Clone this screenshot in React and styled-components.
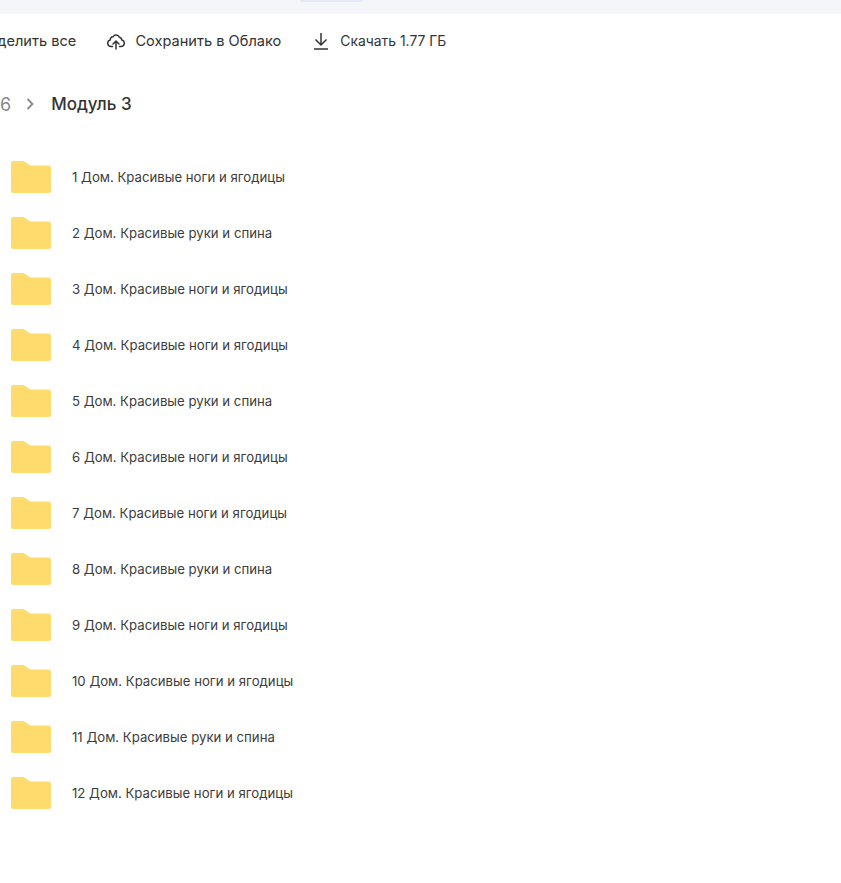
import React from 'react';
import styled, { createGlobalStyle } from 'styled-components';

const GlobalStyle = createGlobalStyle`
  html, body {
    margin: 0;
    padding: 0;
    background: #fff;
    overflow: hidden;
  }
  body {
    font-family: "Inter", "Roboto", "Liberation Sans", sans-serif;
  }
`;

const Page = styled.div`
  width: 841px;
  height: 883px;
  overflow: hidden;
  background: #fff;
`;

const TopStrip = styled.div`
  height: 14px;
  background: #f5f6f9;
  display: flex;
  justify-content: flex-start;
  padding-left: 300px;
`;

const ActiveTab = styled.div`
  width: 63px;
  height: 2px;
  background: #e3e8fb;
  border-radius: 0 0 3px 3px;
`;

const Toolbar = styled.div`
  height: 53px;
  display: flex;
  align-items: center;
  margin-left: -23px;
`;

const ToolButton = styled.div`
  display: flex;
  align-items: center;
  gap: ${(p) => p.$iconGap || 10}px;
  margin-right: ${(p) => p.$gap || 0}px;
  font-size: ${(p) => p.$size || 14.6}px;
  color: #333;
  white-space: nowrap;
`;

const Crumbs = styled.div`
  height: 46px;
  margin-top: 14px;
  display: flex;
  align-items: center;
`;

const CrumbParent = styled.span`
  font-size: 18px;
  color: #8a8a8a;
`;

const CrumbCurrent = styled.span`
  font-size: 17px;
  font-weight: 500;
  color: #333;
`;

const Chevron = styled.svg`
  margin: 0 16px 0 14px;
`;

const List = styled.div`
  margin-top: 22px;
  padding-left: 11px;
  display: flex;
  flex-direction: column;
`;

const Row = styled.div`
  height: 56px;
  display: flex;
  align-items: center;
  gap: 21px;
`;

const Name = styled.span`
  font-size: 13.2px;
  color: #3c3c3c;
`;

const CloudIcon = () => (
  <svg width="18" height="18" viewBox="0 0 18 18" fill="none" stroke="#333" strokeWidth="1.5" strokeLinecap="round" strokeLinejoin="round">
    <path d="M5.5 14.5H4A3.3 3.3 0 0 1 3.2 8 3 3 0 0 1 6 4.8 3.6 3.6 0 0 1 12.4 5.2 3 3 0 0 1 14.8 8 3.3 3.3 0 0 1 14 14.5H12.5" />
    <path d="M9 17V9.5M6 12L9 9L12 12" />
  </svg>
);

const DownloadIcon = () => (
  <svg width="16" height="18" viewBox="0 0 16 18" fill="none" stroke="#333" strokeWidth="1.5">
    <path d="M8 1V12.5M2.5 7.5L8 13L13.5 7.5" />
    <path d="M1 17H15" />
  </svg>
);

const FolderIcon = () => (
  <svg width="40" height="32" viewBox="0 0 40 32">
    <path
      d="M2 0H11.5C13 0 14 .6 15 1.6L19 4.5H37.5C39 4.5 40 5.5 40 7V29.5C40 31 39 32 37.5 32H2C.8 32 0 31 0 29.5V2C0 .8.8 0 2 0Z"
      fill="#ffdb6e"
    />
  </svg>
);

const names = [
  '1 Дом. Красивые ноги и ягодицы',
  '2 Дом. Красивые руки и спина',
  '3 Дом. Красивые ноги и ягодицы',
  '4 Дом. Красивые ноги и ягодицы',
  '5 Дом. Красивые руки и спина',
  '6 Дом. Красивые ноги и ягодицы',
  '7 Дом. Красивые ноги и ягодицы',
  '8 Дом. Красивые руки и спина',
  '9 Дом. Красивые ноги и ягодицы',
  '10 Дом. Красивые ноги и ягодицы',
  '11 Дом. Красивые руки и спина',
  '12 Дом. Красивые ноги и ягодицы',
];

const App = () => (
  <Page>
    <GlobalStyle />
    <TopStrip>
      <ActiveTab />
    </TopStrip>
    <Toolbar>
      <ToolButton $gap={31}>Выделить все</ToolButton>
      <ToolButton $gap={32}>
        <CloudIcon />
        Сохранить в Облако
      </ToolButton>
      <ToolButton $iconGap={11} $size={13.9}>
        <DownloadIcon />
        Скачать 1.77 ГБ
      </ToolButton>
    </Toolbar>
    <Crumbs>
      <CrumbParent>6</CrumbParent>
      <Chevron width="10" height="14" viewBox="0 0 10 14" fill="none" stroke="#8a8a8a" strokeWidth="1.8">
        <path d="M2.5 2L7.5 7L2.5 12" />
      </Chevron>
      <CrumbCurrent>Модуль 3</CrumbCurrent>
    </Crumbs>
    <List>
      {names.map((name) => (
        <Row key={name}>
          <FolderIcon />
          <Name>{name}</Name>
        </Row>
      ))}
    </List>
  </Page>
);

export default App;
